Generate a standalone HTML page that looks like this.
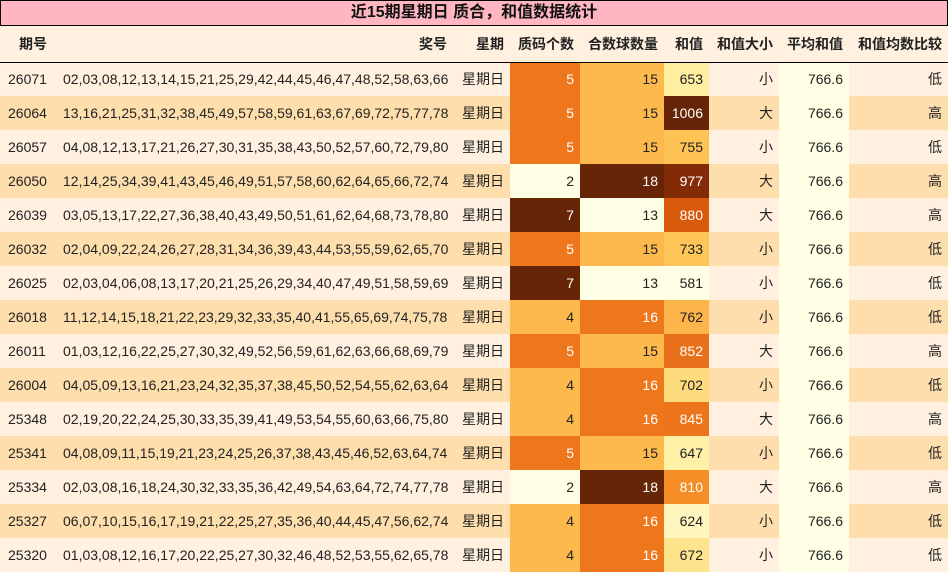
<!DOCTYPE html>
<html><head><meta charset="utf-8"><style>
body{margin:0;width:948px;height:573px;overflow:hidden;background:#fff;font-family:"Liberation Sans","Noto Sans CJK SC",sans-serif;font-size:14px;color:#222}
.t{position:absolute;left:0;top:0;width:946px;height:24px;background:#FFB6C1;border:1px solid #000;text-align:center;font-weight:bold;font-size:16px;line-height:24px;color:#111}
table{position:absolute;left:0;top:26px;width:948px;border-collapse:collapse;table-layout:fixed}
td,th{padding:0 6px;text-align:right;white-space:nowrap;overflow:hidden;box-sizing:border-box}
th{height:36px;background:#FFF0DF;font-weight:bold;border-bottom:1px solid #000;color:#222}
td{height:34px}
tr.a td{background:#FFF0DF}tr.b td{background:#FFDEAD}
td.av{background:#FFFFE5!important}
td.w{color:#fff}
tr td:first-child,tr th:first-child{padding:0 8px 0 8px;text-align:left}
tr th:first-child{padding-left:19px}
</style></head><body>
<div class="t">近15期星期日 质合，和值数据统计</div>
<table>
<colgroup><col style="width:57px"><col style="width:396px"><col style="width:57px"><col style="width:70px"><col style="width:84px"><col style="width:45px"><col style="width:70px"><col style="width:70px"><col style="width:99px"></colgroup>
<tr><th>期号</th><th>奖号</th><th>星期</th><th>质码个数</th><th>合数球数量</th><th>和值</th><th>和值大小</th><th>平均和值</th><th>和值均数比较</th></tr>
<tr class="a"><td>26071</td><td>02,03,08,12,13,14,15,21,25,29,42,44,45,46,47,48,52,58,63,66</td><td>星期日</td><td class="w" style="background:#EE771C">5</td><td style="background:#FDB94B">15</td><td style="background:#FFEDA0">653</td><td>小</td><td class="av">766.6</td><td>低</td></tr>
<tr class="b"><td>26064</td><td>13,16,21,25,31,32,38,45,49,57,58,59,61,63,67,69,72,75,77,78</td><td>星期日</td><td class="w" style="background:#EE771C">5</td><td style="background:#FDB94B">15</td><td class="w" style="background:#662506">1006</td><td>大</td><td class="av">766.6</td><td>高</td></tr>
<tr class="a"><td>26057</td><td>04,08,12,13,17,21,26,27,30,31,35,38,43,50,52,57,60,72,79,80</td><td>星期日</td><td class="w" style="background:#EE771C">5</td><td style="background:#FDB94B">15</td><td style="background:#FEC255">755</td><td>小</td><td class="av">766.6</td><td>低</td></tr>
<tr class="b"><td>26050</td><td>12,14,25,34,39,41,43,45,46,49,51,57,58,60,62,64,65,66,72,74</td><td>星期日</td><td style="background:#FFFFE5">2</td><td class="w" style="background:#662506">18</td><td class="w" style="background:#832B06">977</td><td>大</td><td class="av">766.6</td><td>高</td></tr>
<tr class="a"><td>26039</td><td>03,05,13,17,22,27,36,38,40,43,49,50,51,61,62,64,68,73,78,80</td><td>星期日</td><td class="w" style="background:#662506">7</td><td style="background:#FFFFE5">13</td><td class="w" style="background:#D95A0A">880</td><td>大</td><td class="av">766.6</td><td>高</td></tr>
<tr class="b"><td>26032</td><td>02,04,09,22,24,26,27,28,31,34,36,39,43,44,53,55,59,62,65,70</td><td>星期日</td><td class="w" style="background:#EE771C">5</td><td style="background:#FDB94B">15</td><td style="background:#FEC658">733</td><td>小</td><td class="av">766.6</td><td>低</td></tr>
<tr class="a"><td>26025</td><td>02,03,04,06,08,13,17,20,21,25,26,29,34,40,47,49,51,58,59,69</td><td>星期日</td><td class="w" style="background:#662506">7</td><td style="background:#FFFFE5">13</td><td style="background:#FFFFE5">581</td><td>小</td><td class="av">766.6</td><td>低</td></tr>
<tr class="b"><td>26018</td><td>11,12,14,15,18,21,22,23,29,32,33,35,40,41,55,65,69,74,75,78</td><td>星期日</td><td style="background:#FDB94B">4</td><td class="w" style="background:#EE771C">16</td><td style="background:#FDB44B">762</td><td>小</td><td class="av">766.6</td><td>低</td></tr>
<tr class="a"><td>26011</td><td>01,03,12,16,22,25,27,30,32,49,52,56,59,61,62,63,66,68,69,79</td><td>星期日</td><td class="w" style="background:#EE771C">5</td><td style="background:#FDB94B">15</td><td class="w" style="background:#E8701A">852</td><td>大</td><td class="av">766.6</td><td>高</td></tr>
<tr class="b"><td>26004</td><td>04,05,09,13,16,21,23,24,32,35,37,38,45,50,52,54,55,62,63,64</td><td>星期日</td><td style="background:#FDB94B">4</td><td class="w" style="background:#EE771C">16</td><td style="background:#FEDB7D">702</td><td>小</td><td class="av">766.6</td><td>低</td></tr>
<tr class="a"><td>25348</td><td>02,19,20,22,24,25,30,33,35,39,41,49,53,54,55,60,63,66,75,80</td><td>星期日</td><td style="background:#FDB94B">4</td><td class="w" style="background:#EE771C">16</td><td class="w" style="background:#EC751C">845</td><td>大</td><td class="av">766.6</td><td>高</td></tr>
<tr class="b"><td>25341</td><td>04,08,09,11,15,19,21,23,24,25,26,37,38,43,45,46,52,63,64,74</td><td>星期日</td><td class="w" style="background:#EE771C">5</td><td style="background:#FDB94B">15</td><td style="background:#FFF0A8">647</td><td>小</td><td class="av">766.6</td><td>低</td></tr>
<tr class="a"><td>25334</td><td>02,03,08,16,18,24,30,32,33,35,36,42,49,54,63,64,72,74,77,78</td><td>星期日</td><td style="background:#FFFFE5">2</td><td class="w" style="background:#662506">18</td><td class="w" style="background:#F68E27">810</td><td>大</td><td class="av">766.6</td><td>高</td></tr>
<tr class="b"><td>25327</td><td>06,07,10,15,16,17,19,21,22,25,27,35,36,40,44,45,47,56,62,74</td><td>星期日</td><td style="background:#FDB94B">4</td><td class="w" style="background:#EE771C">16</td><td style="background:#FFF5BF">624</td><td>小</td><td class="av">766.6</td><td>低</td></tr>
<tr class="a"><td>25320</td><td>01,03,08,12,16,17,20,22,25,27,30,32,46,48,52,53,55,62,65,78</td><td>星期日</td><td style="background:#FDB94B">4</td><td class="w" style="background:#EE771C">16</td><td style="background:#FFE48E">672</td><td>小</td><td class="av">766.6</td><td>低</td></tr>
</table>
</body></html>
